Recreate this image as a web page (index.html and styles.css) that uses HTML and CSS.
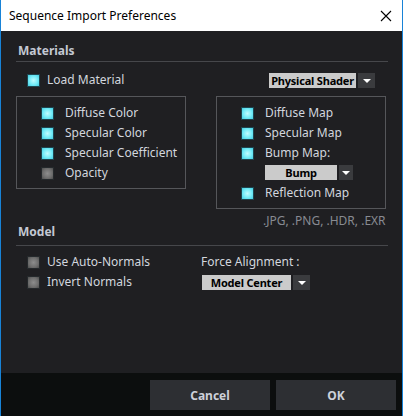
FILE: index.html
```html
<!DOCTYPE html>
<html lang="en">

<head>
  <meta charset="UTF-8">
  <title>Sequence Import Preferences</title>
  <link rel="stylesheet" href="styles.css">
</head>

<body>
  <div class="window">
    <div class="titlebar">
      <span class="title">Sequence Import Preferences</span>
      <svg class="close" width="12" height="12" viewBox="0 0 12 12">
        <path d="M1 1 L11 11 M11 1 L1 11" stroke="#000" stroke-width="1.1" fill="none" />
      </svg>
    </div>

    <div class="content">
      <!-- Materials -->
      <div class="heading">Materials</div>
      <div class="load-row">
        <label class="check on">Load Material</label>
        <div class="dropdown shader">
          <span class="value">Physical Shader</span>
          <span class="arrow"></span>
        </div>
      </div>

      <div class="columns">
        <div class="box">
          <div class="row"><label class="check on">Diffuse Color</label></div>
          <div class="row"><label class="check on">Specular Color</label></div>
          <div class="row"><label class="check on">Specular Coefficient</label></div>
          <div class="row"><label class="check">Opacity</label></div>
        </div>
        <div class="right-col">
          <div class="box">
            <div class="row"><label class="check on">Diffuse Map</label></div>
            <div class="row"><label class="check on">Specular Map</label></div>
            <div class="row"><label class="check on">Bump Map:</label></div>
            <div class="row sub">
              <div class="dropdown bump">
                <span class="value">Bump</span>
                <span class="arrow"></span>
              </div>
            </div>
            <div class="row"><label class="check on">Reflection Map</label></div>
          </div>
          <div class="formats">.JPG, .PNG, .HDR, .EXR</div>
        </div>
      </div>

      <!-- Model -->
      <div class="heading model">Model</div>
      <div class="model-grid">
        <label class="check">Use Auto-Normals</label>
        <span class="caption">Force Alignment :</span>
        <label class="check">Invert Normals</label>
        <div class="dropdown align">
          <span class="value">Model Center</span>
          <span class="arrow"></span>
        </div>
      </div>
    </div>

    <div class="footer">
      <button class="btn">Cancel</button>
      <button class="btn">OK</button>
    </div>
  </div>
</body>

</html>
```

FILE: styles.css
```css
body {
  margin: 0;
  background: #202023;
  font-family: "Noto Sans", "Open Sans", sans-serif;
  font-size: 12px;
}

.window {
  width: 403px;
  height: 416px;
  box-sizing: border-box;
  border-left: 1px solid #1883d7;
  border-right: 1px solid #1883d7;
  display: flex;
  flex-direction: column;
}

/* 标题栏 */
.titlebar {
  height: 31px;
  flex: none;
  background: #fff;
  display: flex;
  align-items: center;
  justify-content: space-between;
  padding: 0 10px 0 8px;
}

.title {
  color: #000;
  font-size: 12px;
}

.close {
  display: block;
}

/* 主体 */
.content {
  flex: 1;
  background: #1f1f22;
  padding: 12px 14px 0 15px;
  color: #d2d6de;
}

.heading {
  font-weight: bold;
  line-height: 16px;
  color: #c3c8d2;
  padding: 0 0 2px 2px;
  border-bottom: 1px solid #46474b;
}

.heading.model {
  margin-top: -4px;
  padding-bottom: 5px;
}

.check {
  display: flex;
  align-items: center;
  gap: 7px;
  line-height: 16px;
  white-space: nowrap;
}

.check::before {
  content: "";
  width: 11px;
  height: 11px;
  flex: none;
  border: 1px solid #25292c;
  background: radial-gradient(circle, #8d8d8d 0%, #6e6e6e 60%, #4d4d4d 100%);
}

.check.on::before {
  border-color: #1e4650;
  background: radial-gradient(circle, #c0fcff 0%, #74ecf8 55%, #44cde2 100%);
}

.load-row {
  display: flex;
  align-items: center;
  justify-content: space-between;
  margin-top: 10px;
  padding: 0 13px 0 11px;
}

/* 下拉框 */
.dropdown {
  display: flex;
  height: 15px;
  gap: 2px;
}

.dropdown .value {
  background: #cbcbcb;
  color: #000;
  font-weight: bold;
  font-size: 11px;
  line-height: 15px;
  text-align: center;
  white-space: nowrap;
  letter-spacing: -0.2px;
}

.dropdown .arrow {
  width: 17px;
  background: #3a3b3e;
  position: relative;
}

.dropdown .arrow::after {
  content: "";
  position: absolute;
  left: 5px;
  top: 6px;
  border-left: 4px solid transparent;
  border-right: 4px solid transparent;
  border-top: 4px solid #fff;
}

.shader .value {
  width: 87px;
}

.bump .value {
  width: 72px;
}

.bump .arrow {
  width: 14px;
}

.bump .arrow::after {
  left: 3px;
}

.align .value {
  width: 89px;
}

.columns {
  display: flex;
  align-items: flex-start;
  gap: 30px;
  margin-top: 8px;
}

.box {
  border: 1px solid #55565a;
  padding: 6px 0 5px 24px;
  box-sizing: border-box;
  width: 170px;
}

.row {
  height: 20px;
  display: flex;
  align-items: center;
}

.row .check {
  gap: 11px;
}

.row.sub {
  padding-left: 24px;
  align-items: flex-start;
  padding-top: 2px;
  box-sizing: border-box;
}

.formats {
  color: #888b92;
  line-height: 14px;
  margin-top: 5px;
  padding-left: 47px;
}

.model-grid {
  display: grid;
  grid-template-columns: 174px auto;
  grid-auto-rows: 20px;
  align-items: center;
  margin-top: 6px;
  padding-left: 11px;
}

.caption {
  line-height: 16px;
}

.align {
  margin-left: 1px;
}

/* 底部按钮 */
.footer {
  height: 43px;
  flex: none;
  background: #0c0e0e;
  display: flex;
  justify-content: flex-end;
  gap: 6px;
  padding: 7px 6px 0 0;
  box-sizing: border-box;
}

.btn {
  width: 120px;
  height: 30px;
  border: none;
  background: #2d2f33;
  color: #cdd1da;
  font-family: "Noto Sans", "Open Sans", sans-serif;
  font-size: 12px;
  font-weight: bold;
}
```
